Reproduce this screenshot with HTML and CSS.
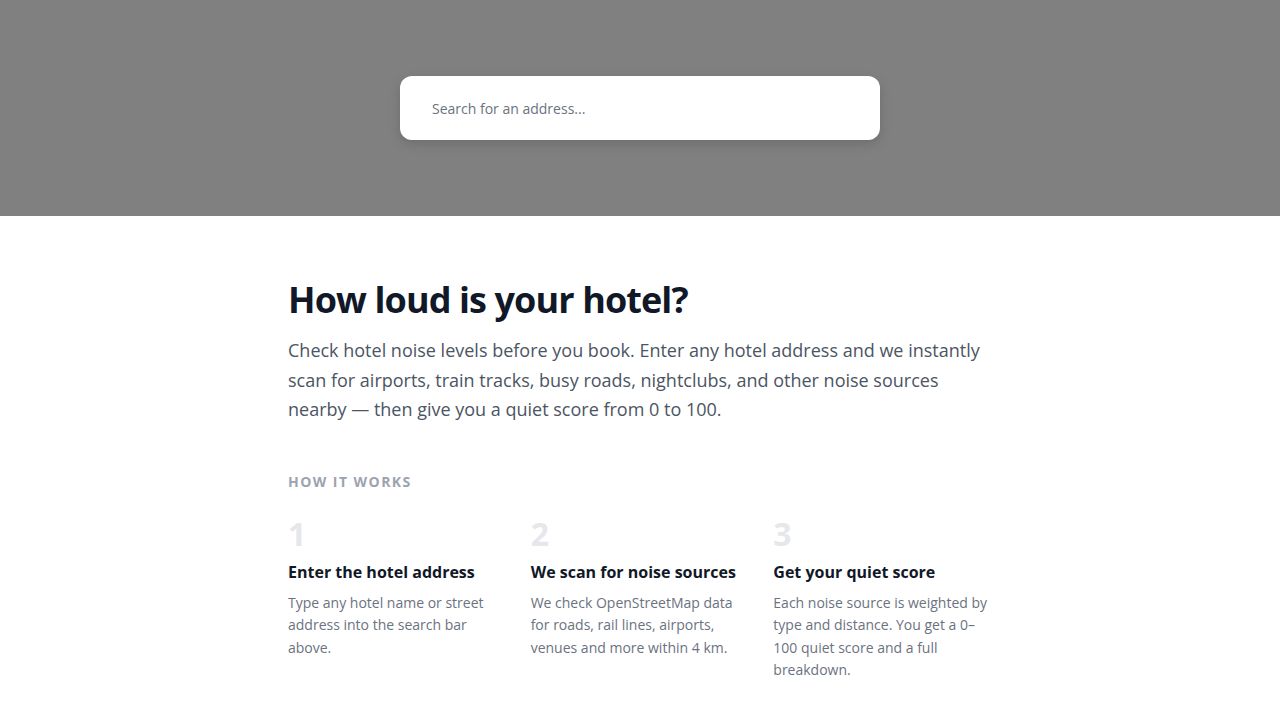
FILE: index.html
```html
<!DOCTYPE html>
<html>
<head>
  <title>How loud is your hotel?</title>
  <link rel="stylesheet" href="styles.css">
</head>
<body>
  <div id="hero">
    <div class="search-box">
      <input type="text" id="address" placeholder="Search for an address...">
    </div>
  </div>

  <div class="content">
    <h1>How loud is your hotel?</h1>
    <p class="intro">Check hotel noise levels before you book. Enter any hotel address and we instantly scan for airports, train tracks, busy roads, nightclubs, and other noise sources nearby — then give you a quiet score from 0 to 100.</p>

    <h3 class="label">How it works</h3>
    <div class="steps">
      <div class="step">
        <div class="num">1</div>
        <h4>Enter the hotel address</h4>
        <p>Type any hotel name or street address into the search bar above.</p>
      </div>
      <div class="step">
        <div class="num">2</div>
        <h4>We scan for noise sources</h4>
        <p>We check OpenStreetMap data for roads, rail lines, airports, venues and more within 4 km.</p>
      </div>
      <div class="step">
        <div class="num">3</div>
        <h4>Get your quiet score</h4>
        <p>Each noise source is weighted by type and distance. You get a 0–100 quiet score and a full breakdown.</p>
      </div>
    </div>
  </div>
</body>
</html>
```

FILE: styles.css
```css
body {
  margin: 0;
  background-color: #fff;
  font-family: "Open Sans", Arial, sans-serif;
  color: #111827;
}

#hero {
  height: 216px;
  background-color: #808080;
  display: flex;
  align-items: center;
  justify-content: center;
}

.search-box {
  width: 480px;
  height: 64px;
  background-color: #fff;
  border-radius: 12px;
  box-shadow: 0 4px 12px rgba(0, 0, 0, 0.15);
  display: flex;
  align-items: center;
  box-sizing: border-box;
  padding: 0 32px;
}

.search-box input {
  width: 100%;
  border: none;
  outline: none;
  padding: 0;
  font-family: inherit;
  font-size: 14px;
  color: #111827;
}

.search-box input::placeholder {
  color: #6b7280;
}

.content {
  max-width: 704px;
  margin: 0 auto;
  padding: 62px 0 40px;
}

h1 {
  margin: 0 0 15px;
  font-size: 36px;
  font-weight: 700;
  line-height: 1.2;
  letter-spacing: -0.9px;
  color: #111827;
}

.intro {
  margin: 0;
  font-size: 18px;
  line-height: 1.64;
  color: #4b5563;
}

.label {
  margin: 47px 0 22px;
  font-size: 14px;
  font-weight: 700;
  line-height: 20px;
  letter-spacing: 1.45px;
  text-transform: uppercase;
  color: #9ca3af;
}

.steps {
  display: grid;
  grid-template-columns: repeat(3, 1fr);
  gap: 24px;
}

.num {
  font-size: 32px;
  font-weight: 700;
  line-height: 40px;
  color: #e5e7eb;
}

.step h4 {
  margin: 6px 0 8px;
  font-size: 16px;
  font-weight: 700;
  line-height: 24px;
  color: #111827;
}

.step p {
  margin: 0;
  font-size: 14px;
  line-height: 1.6;
  color: #6b7280;
}
```
